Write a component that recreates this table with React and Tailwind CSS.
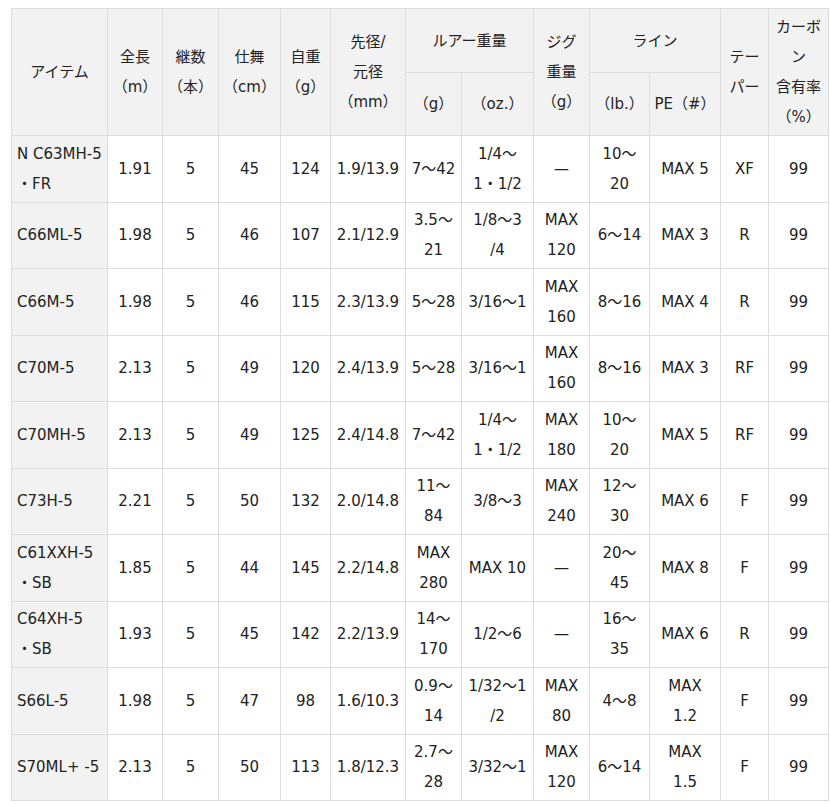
import React from "react";

const rows = [
  [["N C63MH-5", "・FR"], "1.91", "5", "45", "124", "1.9/13.9", ["7～42"], ["1/4～", "1・1/2"], ["—"], ["10～", "20"], ["MAX 5"], "XF", "99"],
  [["C66ML-5"], "1.98", "5", "46", "107", "2.1/12.9", ["3.5～", "21"], ["1/8～3", "/4"], ["MAX", "120"], ["6～14"], ["MAX 3"], "R", "99"],
  [["C66M-5"], "1.98", "5", "46", "115", "2.3/13.9", ["5～28"], ["3/16～1"], ["MAX", "160"], ["8～16"], ["MAX 4"], "R", "99"],
  [["C70M-5"], "2.13", "5", "49", "120", "2.4/13.9", ["5～28"], ["3/16～1"], ["MAX", "160"], ["8～16"], ["MAX 3"], "RF", "99"],
  [["C70MH-5"], "2.13", "5", "49", "125", "2.4/14.8", ["7～42"], ["1/4～", "1・1/2"], ["MAX", "180"], ["10～", "20"], ["MAX 5"], "RF", "99"],
  [["C73H-5"], "2.21", "5", "50", "132", "2.0/14.8", ["11～", "84"], ["3/8～3"], ["MAX", "240"], ["12～", "30"], ["MAX 6"], "F", "99"],
  [["C61XXH-5", "・SB"], "1.85", "5", "44", "145", "2.2/14.8", ["MAX", "280"], ["MAX 10"], ["—"], ["20～", "45"], ["MAX 8"], "F", "99"],
  [["C64XH-5", "・SB"], "1.93", "5", "45", "142", "2.2/13.9", ["14～", "170"], ["1/2～6"], ["—"], ["16～", "35"], ["MAX 6"], "R", "99"],
  [["S66L-5"], "1.98", "5", "47", "98", "1.6/10.3", ["0.9～", "14"], ["1/32～1", "/2"], ["MAX", "80"], ["4～8"], ["MAX", "1.2"], "F", "99"],
  [["S70ML+ -5"], "2.13", "5", "50", "113", "1.8/12.3", ["2.7～", "28"], ["3/32～1"], ["MAX", "120"], ["6～14"], ["MAX", "1.5"], "F", "99"],
];

function Lines({ v }) {
  const list = Array.isArray(v) ? v : [v];
  return list.map((t, i) => (
    <React.Fragment key={i}>
      {i > 0 && <br />}
      {t}
    </React.Fragment>
  ));
}

const th = "border border-[#dddddd] bg-[#f2f2f2] font-normal text-center align-middle px-[2px] py-[2.75px] whitespace-nowrap";
const td = "border border-[#dddddd] text-center align-middle px-[2px] py-[2.75px] whitespace-nowrap";

export default function App() {
  return (
    <div className="pt-[8px] pl-[11px] text-[15px] leading-[30px] text-[#222222] font-[family-name:'DejaVu_Sans','Noto_Sans_CJK_JP',sans-serif]">
      <table className="table-fixed border-collapse w-[817px]">
        <colgroup>
          <col className="w-[96px]" />
          <col className="w-[55px]" />
          <col className="w-[56px]" />
          <col className="w-[62px]" />
          <col className="w-[50px]" />
          <col className="w-[75px]" />
          <col className="w-[56px]" />
          <col className="w-[72px]" />
          <col className="w-[56px]" />
          <col className="w-[60px]" />
          <col className="w-[71px]" />
          <col className="w-[48px]" />
          <col className="w-[60px]" />
        </colgroup>
        <thead>
          <tr className="h-[64px]">
            <th rowSpan={2} className={th}>アイテム</th>
            <th rowSpan={2} className={th}>全長<br />（m）</th>
            <th rowSpan={2} className={th}>継数<br />（本）</th>
            <th rowSpan={2} className={th}>仕舞<br />（cm）</th>
            <th rowSpan={2} className={th}>自重<br />（g）</th>
            <th rowSpan={2} className={th}>先径/<br />元径<br />（mm）</th>
            <th colSpan={2} className={th}>ルアー重量</th>
            <th rowSpan={2} className={th}>ジグ<br />重量<br />（g）</th>
            <th colSpan={2} className={th}>ライン</th>
            <th rowSpan={2} className={th}>テー<br />パー</th>
            <th rowSpan={2} className={th}>カーボ<br />ン<br />含有率<br />（%）</th>
          </tr>
          <tr className="h-[63px]">
            <th className={th}>（g）</th>
            <th className={th}>（oz.）</th>
            <th className={th}>（lb.）</th>
            <th className={th}>PE（#）</th>
          </tr>
        </thead>
        <tbody>
          {rows.map((r, i) => (
            <tr key={i}>
              <td className="border border-[#dddddd] bg-[#f2f2f2] text-left align-middle pl-[5px] pr-[2px] py-[2.75px] whitespace-nowrap">
                <Lines v={r[0]} />
              </td>
              {r.slice(1).map((c, j) => (
                <td key={j} className={td}>
                  <Lines v={c} />
                </td>
              ))}
            </tr>
          ))}
        </tbody>
      </table>
    </div>
  );
}
